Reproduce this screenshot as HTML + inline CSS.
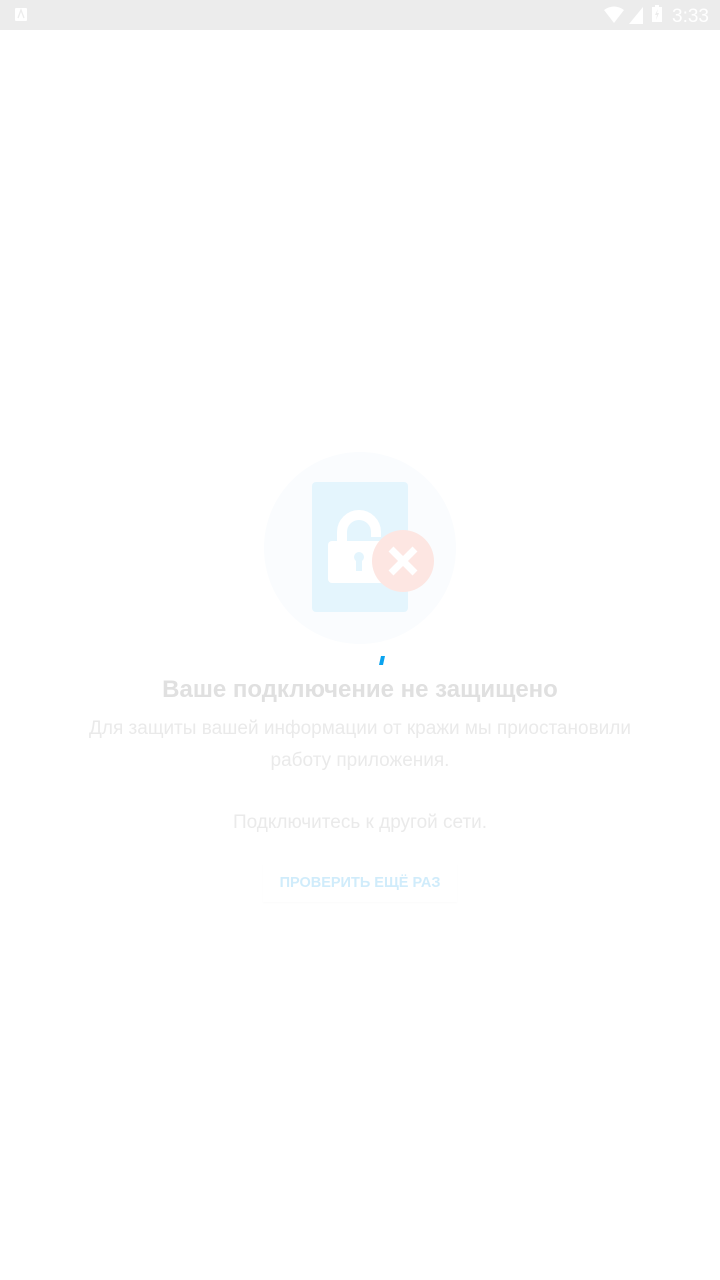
<!DOCTYPE html>
<html><head><meta charset="utf-8"><style>
html,body{margin:0;padding:0;width:720px;height:1280px;background:#fff;overflow:hidden;font-family:"Liberation Sans",sans-serif}
.sb{position:absolute;left:0;top:0;width:720px;height:30px;background:#ececec}
.t{position:absolute;left:0;width:720px;text-align:center}
</style></head><body>
<div class="sb">
<svg width="720" height="30" style="position:absolute;left:0;top:0">
<rect x="15" y="8" width="12" height="13" rx="1" fill="#fff"/>
<path d="M18 18 L21 10 L24 18" stroke="#ececec" stroke-width="1.3" fill="none"/>
<path d="M604 10 Q614 3 624 10 L614 23 Z" fill="#fff"/>
<path d="M629 24 L643 7 L643 24 Z" fill="#fff"/>
<rect x="652" y="7" width="10" height="15" fill="#fff"/><rect x="655" y="5" width="4" height="2" fill="#fff"/>
<path d="M658 9 L655 15 L657 15 L656 20 L659 13 L657 13 Z" fill="#ececec"/>
<text x="672" y="22" font-size="19" fill="#fff" font-family="Liberation Sans">3:33</text>
</svg>
</div>
<svg width="720" height="700" style="position:absolute;left:0;top:0">
<circle cx="360" cy="548" r="96" fill="#fafcfe"/>
<rect x="312" y="482" width="96" height="130" rx="4" fill="#e4f5fd"/>
<path d="M342 545 V532 A17 17 0 0 1 376 532 V537" stroke="#fff" stroke-width="10" fill="none"/>
<rect x="328" y="541" width="64" height="42" rx="4" fill="#fff"/>
<circle cx="359" cy="557" r="5" fill="#e4f5fd"/><rect x="356" y="558" width="6" height="13" fill="#e4f5fd"/>
<circle cx="403" cy="561" r="31" fill="#fde6e2"/>
<path d="M391 549 L415 573 M415 549 L391 573" stroke="#fff" stroke-width="7"/>
<path d="M381 656 L385 656 L383 665 L379 665 Z" fill="#0aa3ef"/>
</svg>
<div class="t" style="top:676px;font-size:24px;font-weight:bold;color:#e0e0e0">Ваше подключение не защищено</div>
<div class="t" style="top:713px;font-size:19px;line-height:32px;color:#eaeaea">Для защиты вашей информации от кражи мы приостановили<br>работу приложения.</div>
<div class="t" style="top:812px;font-size:19px;color:#eaeaea">Подключитесь к другой сети.</div>
<div style="position:absolute;left:263px;top:864px;width:194px;height:38px;box-shadow:0 1px 2px rgba(0,0,0,0.02)"></div>
<div class="t" style="top:875px;font-size:14.5px;font-weight:bold;color:#d0ecfb">ПРОВЕРИТЬ ЕЩЁ РАЗ</div>
</body></html>
